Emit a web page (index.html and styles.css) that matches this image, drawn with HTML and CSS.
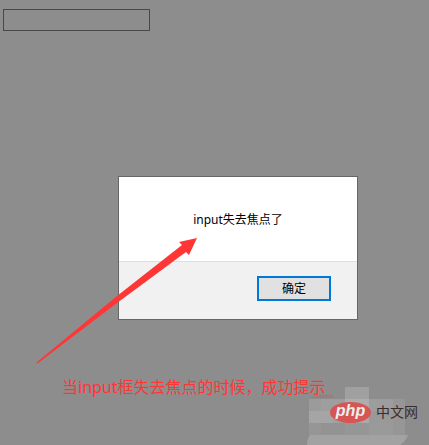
FILE: index.html
```
<!DOCTYPE html>
<html lang="zh-CN">
<head>
  <meta charset="UTF-8" />
  <meta name="viewport" content="width=device-width, initial-scale=1" />
  <title>input失去焦点</title>
  <link rel="stylesheet" href="styles.css">
</head>
<body>

  <input class="field" type="text" aria-label="input框" />

  <!-- Alert dialog -->
  <div class="dialog" role="alertdialog" aria-labelledby="message">
    <div class="dialog-body" id="message">input失去焦点了</div>
    <div class="dialog-footer">
      <button class="ok" type="button">确定</button>
    </div>
  </div>

  <p class="caption">当input框失去焦点的时候，成功提示</p>

  <!-- Arrow from the caption to the message -->
  <svg class="arrow" width="162" height="128" viewBox="0 0 162 128" aria-hidden="true">
    <path d="M0.5 125.5 L81 59 L146 8 L143 5 L161 1 L153 18 L150 15 L81 66 L1.5 126.5 Z" fill="#ff3636" />
  </svg>

  <div class="watermark">
    <svg class="mosaic" width="104" height="59" viewBox="0 0 104 59" aria-hidden="true">
      <path d="M3 12 Q13 7 26 9 V12 Z" fill="#987e7e" />
      <rect x="2" y="13" width="96" height="36" fill="#969696" />
      <rect x="2" y="13" width="12" height="12" fill="#9b9b9b" />
      <rect x="14" y="13" width="24" height="12" fill="#9e9e9e" />
      <rect x="38" y="1" width="24" height="12" fill="#a0a0a0" />
      <rect x="38" y="13" width="24" height="12" fill="#adadad" />
      <rect x="62" y="13" width="24" height="12" fill="#9d9d9d" />
      <rect x="2" y="25" width="24" height="12" fill="#a5a5a5" />
      <rect x="26" y="25" width="12" height="12" fill="#a0a0a0" />
      <rect x="38" y="25" width="24" height="12" fill="#a9a9a9" />
      <rect x="62" y="25" width="24" height="12" fill="#999999" />
      <rect x="14" y="37" width="24" height="12" fill="#939393" />
      <rect x="62" y="37" width="24" height="12" fill="#9a9a9a" />
      <path d="M3 49 H101 Q99 55 93 59 H0 Q0 53 3 49 Z" fill="#a2a2a2" />
    </svg>
    <span class="php">php</span>
    <span class="site">中文网</span>
  </div>

</body>
</html>
```
FILE: styles.css
```
* {
  box-sizing: border-box;
}

body {
  position: relative;
  min-height: 100vh;
  margin: 0;
  padding: 9px 3px 0;
  overflow: hidden;
  background-color: #8d8d8d;
  font-family: "Noto Sans", "Noto Sans CJK SC", sans-serif;
}

.field {
  display: block;
  width: 147px;
  height: 22px;
  border: 1px solid #484848;
  background-color: transparent;
}

.dialog {
  width: 240px;
  margin: 145px 68px 0 auto;
  border: 1px solid #666;
  background-color: #fff;
  color: #000;
  font-size: 12px;
  line-height: 18px;
}

.dialog-body {
  padding: 34px 16px 32px;
  text-align: center;
}

.dialog-footer {
  display: flex;
  justify-content: flex-end;
  padding: 14px 26px 18px;
  border-top: 1px solid #dfdfdf;
  background-color: #f1f1f1;
}

.ok {
  width: 74px;
  height: 25px;
  padding: 0;
  border: 2px solid #0078d7;
  background-color: #e1e1e1;
  color: #000;
  font: inherit;
}

.caption {
  margin: 55px 0 0 59px;
  color: #ff3636;
  font-size: 16px;
  line-height: 24px;
  white-space: nowrap;
}

.arrow {
  position: absolute;
  top: 237px;
  left: 36px;
}

/* Logo lies over the bottom right corner */
.watermark {
  position: absolute;
  right: 10px;
  bottom: 0;
  display: flex;
  align-items: center;
  gap: 5px;
  width: 112px;
  height: 59px;
  padding: 0 0 7px 23px;
}

.mosaic {
  position: absolute;
  bottom: 0;
  left: 0;
}

.php {
  position: relative;
  width: 41px;
  height: 21px;
  border-radius: 50%;
  background-color: #d65656;
  color: #eee;
  font-family: "Liberation Sans", sans-serif;
  font-size: 16px;
  font-style: italic;
  font-weight: bold;
  line-height: 18px;
  text-align: center;
}

.site {
  position: relative;
  color: #3d2c2c;
  font-size: 14px;
  line-height: 20px;
  white-space: nowrap;
}
```
